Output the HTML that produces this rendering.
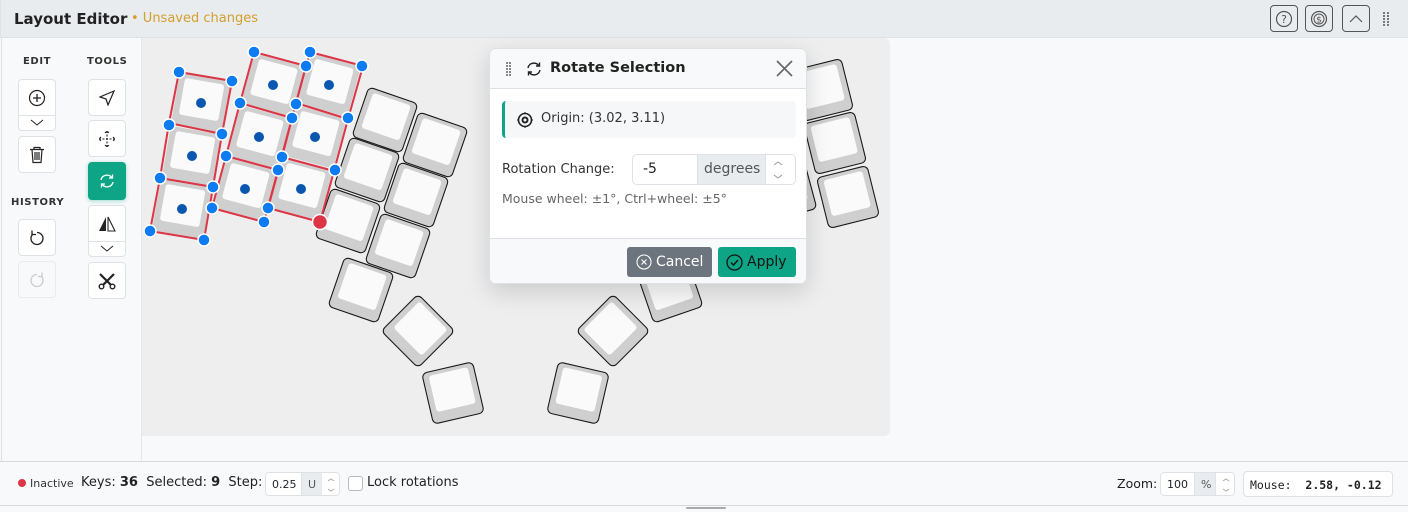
<!DOCTYPE html>
<html><head><meta charset="utf-8"><style>
*{box-sizing:border-box;margin:0;padding:0}
body{width:1408px;height:512px;overflow:hidden;background:#f8f9fa;font-family:"DejaVu Sans","Liberation Sans",sans-serif;color:#212529;position:relative}
.abs{position:absolute}
.hdr{left:0;top:0;width:1408px;height:38px;background:#e9ecef;border-bottom:1px solid #dee2e6;border-left:1px solid #dee2e6}
.btn{position:absolute;background:#fff;border:1px solid #dee2e6;border-radius:4px;display:flex;align-items:center;justify-content:center}
.lbl{position:absolute;font-size:10px;font-weight:bold;letter-spacing:.6px;color:#333}
.hb{position:absolute;top:5px;width:28px;height:27px;border:1px solid #555;border-radius:4px;display:flex;align-items:center;justify-content:center}
.status{left:0;top:461px;width:1408px;height:45px;border-top:1px solid #d5d8dc;border-bottom:1px solid #d5d8dc;background:#f8f9fa;font-size:13px}
.dlg{left:489px;top:48px;width:318px;height:236px;background:#fff;border:1px solid #dee2e6;border-radius:7px;box-shadow:0 8px 24px rgba(0,0,0,.15);overflow:hidden}
</style></head><body>
<div class="abs hdr"></div>
<div class="abs" style="left:14px;top:10px;font-size:15px;font-weight:bold;color:#222">Layout Editor</div>
<div class="abs" style="left:131px;top:11px;font-size:13px;color:#d39e2a">• Unsaved changes</div>
<div class="hb" style="left:1270px"><svg width="18" height="18" viewBox="0 0 18 18"><circle cx="9" cy="9" r="7.5" fill="none" stroke="#555" stroke-width="1.2"/><text x="9" y="13" font-size="11" text-anchor="middle" fill="#555" font-family="DejaVu Sans">?</text></svg></div>
<div class="hb" style="left:1305px"><svg width="18" height="18" viewBox="0 0 18 18"><circle cx="9" cy="9" r="7.5" fill="none" stroke="#555" stroke-width="1.2"/><circle cx="9" cy="9" r="5" fill="none" stroke="#555" stroke-width="1"/><text x="9" y="12.5" font-size="9" text-anchor="middle" fill="#555" font-family="DejaVu Sans">$</text></svg></div>
<div class="hb" style="left:1342px"><svg width="14" height="10"><path d="M1 8 L7 2 L13 8" fill="none" stroke="#555" stroke-width="1.2"/></svg></div>
<svg class="abs" style="left:1383px;top:12px" width="8" height="14"><g fill="#777"><rect x="0" y="0" width="2" height="2"/><rect x="4" y="0" width="2" height="2"/><rect x="0" y="3" width="2" height="2"/><rect x="4" y="3" width="2" height="2"/><rect x="0" y="6" width="2" height="2"/><rect x="4" y="6" width="2" height="2"/><rect x="0" y="9" width="2" height="2"/><rect x="4" y="9" width="2" height="2"/><rect x="0" y="12" width="2" height="2"/><rect x="4" y="12" width="2" height="2"/></g></svg>

<div class="abs" style="left:1px;top:38px;width:141px;height:423px;background:#f8f9fa;border-right:1px solid #e5e7ea;border-left:1px solid #dee2e6"></div>
<div class="lbl" style="left:23px;top:56px">EDIT</div>
<div class="lbl" style="left:87px;top:56px">TOOLS</div>
<div class="lbl" style="left:11px;top:197px">HISTORY</div>
<div class="btn" style="left:18px;top:79px;width:38px;height:37px;border-radius:4px 4px 0 0"><svg width="18" height="18"><circle cx="9" cy="9" r="7.5" fill="none" stroke="#222" stroke-width="1.2"/><path d="M9 5v8M5 9h8" stroke="#222" stroke-width="1.3"/></svg></div>
<div class="btn" style="left:18px;top:115px;width:38px;height:16px;border-radius:0 0 4px 4px"><svg width="14" height="8"><path d="M1 1l6 5 6-5" fill="none" stroke="#222"/></svg></div>
<div class="btn" style="left:18px;top:136px;width:38px;height:37px"><svg width="16" height="18"><path d="M1 3.5h14M5 3.5V1.5h6v2M3 3.5l1 13h8l1-13M6 6v8M8 6v8M10 6v8" fill="none" stroke="#222" stroke-width="1.2"/></svg></div>
<div class="btn" style="left:18px;top:219px;width:38px;height:37px"><svg width="18" height="18"><path d="M5 5A6 6 0 1 0 9 3.5" fill="none" stroke="#222" stroke-width="1.3"/><path d="M4 1.5v4h4" fill="none" stroke="#222" stroke-width="1.3"/></svg></div>
<div class="btn" style="left:18px;top:261px;width:38px;height:37px;background:#f8f9fa;border-color:#e9ecef"><svg width="18" height="18"><path d="M13 5A6 6 0 1 1 9 3.5" fill="none" stroke="#ccc" stroke-width="1.3"/><path d="M14 1.5v4h-4" fill="none" stroke="#ccc" stroke-width="1.3"/></svg></div>

<div class="btn" style="left:88px;top:79px;width:38px;height:37px"><svg width="16" height="16"><path d="M15 1L1 7l6 2 2 6z" fill="none" stroke="#222" stroke-width="1.2"/></svg></div>
<div class="btn" style="left:88px;top:120px;width:38px;height:37px"><svg width="18" height="18"><path d="M9 1v16M1 9h16M7 3l2-2 2 2M7 15l2 2 2-2M3 7l-2 2 2 2M15 7l2 2-2 2" fill="none" stroke="#222" stroke-width="1.1" stroke-dasharray="2 1.5"/></svg></div>
<div class="btn" style="left:88px;top:162px;width:38px;height:38px;background:#0ea586;border-color:#0ea586;box-shadow:0 1px 4px rgba(14,165,134,.4)"><svg width="18" height="18"><path d="M3 8a6 6 0 0 1 11-2M15 10a6 6 0 0 1-11 2" fill="none" stroke="#fff" stroke-width="1.3"/><path d="M14.5 2.5v3.5h-3.5M3.5 15.5v-3.5h3.5" fill="none" stroke="#fff" stroke-width="1.3"/></svg></div>
<div class="btn" style="left:88px;top:205px;width:38px;height:37px;border-radius:4px 4px 0 0"><svg width="18" height="16"><path d="M8 1v14H1z" fill="#222"/><path d="M10 1v14h7z" fill="none" stroke="#222" stroke-width="1.1"/></svg></div>
<div class="btn" style="left:88px;top:241px;width:38px;height:16px;border-radius:0 0 4px 4px"><svg width="14" height="8"><path d="M1 1l6 5 6-5" fill="none" stroke="#222"/></svg></div>
<div class="btn" style="left:88px;top:262px;width:38px;height:37px"><svg width="18" height="18"><path d="M2 2l14 14M16 2L2 16" stroke="#222" stroke-width="2.2"/><circle cx="3.5" cy="14.5" r="2.3" fill="#fff" stroke="#222" stroke-width="1.4"/><circle cx="14.5" cy="14.5" r="2.3" fill="#fff" stroke="#222" stroke-width="1.4"/></svg></div>

<div class="abs" style="left:142px;top:38px;width:748px;height:398px;background:#eeeeee;border-radius:0 6px 6px 0"></div>
<svg class="abs" style="left:0;top:0" width="1408" height="512">
<defs>
<clipPath id="cp"><rect x="142" y="38" width="748" height="398"/></clipPath>
<g id="k"><rect x="-26" y="-26" width="52" height="52" rx="5" fill="#cfcfcf" stroke="#1a1a1a" stroke-width="1.1"/><rect x="-20" y="-22" width="40" height="37" rx="3" fill="#fafafa"/></g>
<g id="s"><rect x="-26" y="-26" width="52" height="52" rx="5" fill="#cfcfcf"/><rect x="-20" y="-22" width="40" height="37" rx="3" fill="#fafafa"/></g>
</defs>
<g clip-path="url(#cp)">
<use href="#k" transform="translate(385,120) rotate(19)"/>
<use href="#k" transform="translate(435,145) rotate(19)"/>
<use href="#k" transform="translate(367,170) rotate(19)"/>
<use href="#k" transform="translate(416,195) rotate(19)"/>
<use href="#k" transform="translate(348,221) rotate(19)"/>
<use href="#k" transform="translate(398,246) rotate(19)"/>
<use href="#k" transform="translate(361,290) rotate(19)"/>
<use href="#k" transform="translate(418,331) rotate(45)"/>
<use href="#k" transform="translate(453,393) rotate(-13)"/>
<use href="#k" transform="translate(670,290) rotate(-19)"/>
<use href="#k" transform="translate(613,331) rotate(-45)"/>
<use href="#k" transform="translate(578,393) rotate(13)"/>
<use href="#k" transform="translate(785,190) rotate(-15)"/>
<use href="#k" transform="translate(822,90) rotate(-14)"/>
<use href="#k" transform="translate(835,143) rotate(-14)"/>
<use href="#k" transform="translate(848,197) rotate(-14)"/>
<use href="#s" transform="translate(201,103) rotate(10)"/>
<use href="#s" transform="translate(192,156) rotate(10)"/>
<use href="#s" transform="translate(182,209) rotate(10)"/>
<use href="#s" transform="translate(273,85) rotate(15)"/>
<use href="#s" transform="translate(259,137) rotate(15)"/>
<use href="#s" transform="translate(245,189) rotate(15)"/>
<use href="#s" transform="translate(329,85) rotate(15)"/>
<use href="#s" transform="translate(315,137) rotate(15)"/>
<use href="#s" transform="translate(301,189) rotate(15)"/>
<g fill="none" stroke="#dc3545" stroke-width="2">
<path d="M179 72L232 81L222 134L169 123Z M169 123L222 134L213 187L160 178Z M160 178L213 187L204 240L150 231Z"/>
<path d="M254 52L306 66L292 118L240 103Z M240 103L292 118L278 170L226 156Z M226 156L278 170L264 222L212 208Z"/>
<path d="M310 52L363 66L348 119L296 103Z M296 103L348 119L334 171L282 157Z M282 157L334 171L320 222L268 208Z"/>
</g>
<g fill="#0a57b0">
<circle cx="201" cy="103" r="5"/><circle cx="192" cy="156" r="5"/><circle cx="182" cy="209" r="5"/>
<circle cx="273" cy="85" r="5"/><circle cx="259" cy="137" r="5"/><circle cx="245" cy="189" r="5"/>
<circle cx="329" cy="85" r="5"/><circle cx="315" cy="137" r="5"/><circle cx="301" cy="189" r="5"/>
</g>
<g fill="#0d7bf2" stroke="#fff" stroke-width="1.5">
<circle cx="179" cy="72" r="6"/><circle cx="232" cy="81" r="6"/><circle cx="169" cy="125" r="6"/><circle cx="222" cy="134" r="6"/><circle cx="160" cy="178" r="6"/><circle cx="213" cy="187" r="6"/><circle cx="150" cy="231" r="6"/><circle cx="204" cy="240" r="6"/>
<circle cx="254" cy="52" r="6"/><circle cx="306" cy="66" r="6"/><circle cx="240" cy="103" r="6"/><circle cx="292" cy="118" r="6"/><circle cx="226" cy="156" r="6"/><circle cx="278" cy="170" r="6"/><circle cx="212" cy="208" r="6"/><circle cx="264" cy="222" r="6"/>
<circle cx="310" cy="52" r="6"/><circle cx="362" cy="66" r="6"/><circle cx="296" cy="104" r="6"/><circle cx="348" cy="118" r="6"/><circle cx="282" cy="157" r="6"/><circle cx="335" cy="170" r="6"/><circle cx="268" cy="208" r="6"/>
</g>
<circle cx="320" cy="222" r="7.5" fill="#dc3545" stroke="#fff" stroke-width="1.5"/>
</g>
</svg>

<div class="abs dlg">
 <div style="height:40px;background:#f8f9fa;border-bottom:1px solid #dee2e6;position:relative">
  <svg class="abs" style="left:16px;top:13px" width="6" height="14"><g fill="#888"><rect x="0" y="0" width="2" height="2"/><rect x="3" y="0" width="2" height="2"/><rect x="0" y="3" width="2" height="2"/><rect x="3" y="3" width="2" height="2"/><rect x="0" y="6" width="2" height="2"/><rect x="3" y="6" width="2" height="2"/><rect x="0" y="9" width="2" height="2"/><rect x="3" y="9" width="2" height="2"/><rect x="0" y="12" width="2" height="2"/><rect x="3" y="12" width="2" height="2"/></g></svg>
  <svg class="abs" style="left:36px;top:12px" width="16" height="16"><path d="M2 7a6 6 0 0 1 11-2M14 9a6 6 0 0 1-11 2" fill="none" stroke="#222" stroke-width="1.4"/><path d="M13.5 1.5v3.5h-3.5M2.5 14.5v-3.5h3.5" fill="none" stroke="#222" stroke-width="1.4"/></svg>
  <div class="abs" style="left:60px;top:11px;font-size:14.5px;font-weight:bold;color:#222">Rotate Selection</div>
  <svg class="abs" style="left:286px;top:11px" width="17" height="17"><path d="M1 1l15 15M16 1L1 16" stroke="#666" stroke-width="1.6"/></svg>
 </div>
 <div class="abs" style="left:12px;top:52px;width:294px;height:37px;background:#f6f7f9;border-left:3px solid #0ea586;border-radius:4px"></div>
 <svg class="abs" style="left:27px;top:63px" width="16" height="16"><circle cx="8" cy="8" r="6.5" fill="none" stroke="#222" stroke-width="1.6"/><circle cx="8" cy="8" r="3.5" fill="#222"/><circle cx="8" cy="8" r="1.5" fill="#fff"/><path d="M8 0v2M8 14v2M0 8h2M14 8h2" stroke="#222"/></svg>
 <div class="abs" style="left:51px;top:62px;font-size:13px;color:#333">Origin: (3.02, 3.11)</div>
 <div class="abs" style="left:12px;top:113px;font-size:13px;color:#333">Rotation Change:</div>
 <div class="abs" style="left:142px;top:105px;width:164px;height:31px;border:1px solid #dee2e6;border-radius:5px;overflow:hidden;background:#fff">
  <div class="abs" style="left:10px;top:6px;font-size:14px;color:#222">-5</div>
  <div class="abs" style="left:64px;top:0;width:69px;height:31px;background:#e9ecef;border-left:1px solid #dee2e6;border-right:1px solid #dee2e6;font-size:14px;color:#555;padding:6px 0 0 6px">degrees</div>
  <svg class="abs" style="left:138px;top:4px" width="14" height="22"><path d="M3 6l4-3 4 3M3 16l4 3 4-3" fill="none" stroke="#999"/></svg>
 </div>
 <div class="abs" style="left:12px;top:142px;font-size:12.5px;color:#666">Mouse wheel: ±1°, Ctrl+wheel: ±5°</div>
 <div class="abs" style="left:0;top:189px;width:318px;height:48px;background:#f8f9fa;border-top:1px solid #dee2e6"></div>
 <div class="abs" style="left:137px;top:198px;width:85px;height:30px;background:#6c757d;border-radius:3px;color:#fff;font-size:14px;display:flex;align-items:center;padding-left:9px"><svg width="16" height="16" style="margin-right:4px"><circle cx="8" cy="8" r="7" fill="none" stroke="#fff" stroke-width="1.1"/><path d="M5.5 5.5l5 5M10.5 5.5l-5 5" stroke="#fff" stroke-width="1.1"/></svg>Cancel</div>
 <div class="abs" style="left:228px;top:198px;width:78px;height:30px;background:#0ea586;border-radius:3px;color:#111;font-size:14px;display:flex;align-items:center;padding-left:8px"><svg width="17" height="17" style="margin-right:4px"><circle cx="8.5" cy="8.5" r="7.5" fill="none" stroke="#111" stroke-width="1.3"/><path d="M5 8.5l2.5 2.5 4.5-5" fill="none" stroke="#111" stroke-width="1.4"/></svg>Apply</div>
</div>

<div class="abs status"></div>
<div class="abs" style="left:18px;top:479px;width:8px;height:8px;border-radius:50%;background:#dc3545"></div>
<div class="abs" style="left:30px;top:477px;font-size:11px;color:#333">Inactive</div>
<div class="abs" style="left:81px;top:475px;font-size:13px;color:#222">Keys: <b>36</b>&nbsp; Selected: <b>9</b>&nbsp; Step:</div>
<div class="abs" style="left:265px;top:472px;width:75px;height:24px;border:1px solid #dee2e6;border-radius:4px;background:#fff;overflow:hidden">
 <div class="abs" style="left:6px;top:5px;font-size:11px">0.25</div>
 <div class="abs" style="left:35px;top:0;width:21px;height:24px;background:#e9ecef;border-left:1px solid #dee2e6;font-size:11px;color:#555;padding:5px 0 0 6px">U</div>
 <svg class="abs" style="left:60px;top:3px" width="10" height="18"><path d="M2 5l3-2 3 2M2 13l3 2 3-2" fill="none" stroke="#aaa"/></svg>
</div>
<div class="abs" style="left:348px;top:476px;width:15px;height:15px;border:1px solid #bbb;border-radius:3px;background:#fff"></div>
<div class="abs" style="left:367px;top:475px;font-size:13px;color:#222">Lock rotations</div>
<div class="abs" style="left:1117px;top:476px;font-size:12.5px;color:#222">Zoom:</div>
<div class="abs" style="left:1160px;top:472px;width:75px;height:24px;border:1px solid #dee2e6;border-radius:4px;background:#fff;overflow:hidden">
 <div class="abs" style="left:6px;top:5px;font-size:11px">100</div>
 <div class="abs" style="left:33px;top:0;width:22px;height:24px;background:#e9ecef;border-left:1px solid #dee2e6;border-right:1px solid #dee2e6;font-size:11px;color:#555;padding:5px 0 0 6px">%</div>
 <svg class="abs" style="left:60px;top:3px" width="10" height="18"><path d="M2 5l3-2 3 2M2 13l3 2 3-2" fill="none" stroke="#aaa"/></svg>
</div>
<div class="abs" style="left:1243px;top:471px;width:150px;height:26px;border:1px solid #dee2e6;border-radius:4px;background:#fff;font-family:'DejaVu Sans Mono','Liberation Mono',monospace;font-size:11.5px;padding:6px 0 0 6px;color:#222">Mouse: &nbsp;<b>2.58, -0.12</b></div>
<div class="abs" style="left:686px;top:507px;width:40px;height:2px;background:#aaa;border-radius:1px"></div>
</body></html>
